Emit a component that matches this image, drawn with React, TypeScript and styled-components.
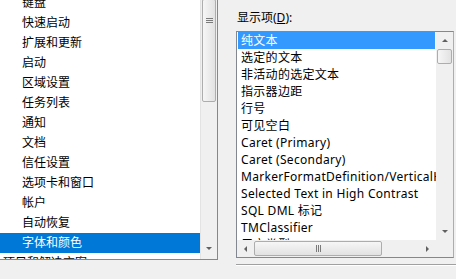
import * as React from 'react'
import styled, { createGlobalStyle } from 'styled-components'

const GlobalStyle = createGlobalStyle`
  html, body {
    margin: 0;
    padding: 0;
    background: #f0f0f0;
    font-family: "Noto Sans", "Noto Sans CJK SC", sans-serif;
    font-size: 12px;
    color: #000;
  }
`

const Page = styled.div`
  width: 456px;
  height: 279px;
  display: flex;
  overflow: hidden;
  background: #f0f0f0;
`

const TreePane = styled.div`
  width: 217px;
  height: 259px;
  display: flex;
  background: #fff;
  border-right: 1px solid #828790;
  border-bottom: 1px solid #828790;
  flex-shrink: 0;
`

const TreeList = styled.div`
  flex: 1;
  overflow: hidden;
`

const TreeScroll = styled.div`
  margin-top: -7px;
  display: flex;
  flex-direction: column;
`

const TreeItem = styled.div<{ $selected?: boolean; $top?: boolean }>`
  height: 20px;
  line-height: 20px;
  padding-left: ${p => (p.$top ? '3px' : '22px')};
  white-space: nowrap;
  background: ${p => (p.$selected ? '#0078d7' : 'transparent')};
  color: ${p => (p.$selected ? '#fff' : '#000')};
`

const VScrollBar = styled.div<{ $bordered?: boolean }>`
  width: 17px;
  display: flex;
  flex-direction: column;
  align-items: center;
  background: #f0f0f0;
  border-left: ${p => (p.$bordered ? '1px solid #e3e3e3' : 'none')};
  box-sizing: border-box;
`

const Thumb = styled.div<{ $horizontal?: boolean }>`
  box-sizing: border-box;
  border: 1px solid #adadad;
  border-radius: 2px;
  background: ${p =>
    p.$horizontal
      ? 'linear-gradient(to bottom, #f6f6f6, #e2e2e2)'
      : 'linear-gradient(to right, #f6f6f6, #e2e2e2)'};
  display: flex;
  align-items: center;
  justify-content: center;
`

const Grip = styled.div<{ $horizontal?: boolean }>`
  display: flex;
  flex-direction: ${p => (p.$horizontal ? 'row' : 'column')};
  gap: 1px;
  & > span {
    display: block;
    background: #7a7a7a;
    width: ${p => (p.$horizontal ? '1px' : '7px')};
    height: ${p => (p.$horizontal ? '7px' : '1px')};
  }
`

const Arrow = styled.div<{ $dir: 'up' | 'down' | 'left' | 'right' }>`
  width: 0;
  height: 0;
  border: 3px solid transparent;
  ${p =>
    p.$dir === 'up'
      ? 'border-bottom: 3px solid #606060; border-top-width: 0;'
      : p.$dir === 'down'
      ? 'border-top: 3px solid #606060; border-bottom-width: 0;'
      : p.$dir === 'left'
      ? 'border-right: 3px solid #606060; border-left-width: 0;'
      : 'border-left: 3px solid #606060; border-right-width: 0;'}
`

const ArrowBox = styled.div<{ $w: number; $h: number }>`
  width: ${p => p.$w}px;
  height: ${p => p.$h}px;
  display: flex;
  align-items: center;
  justify-content: center;
  flex-shrink: 0;
`

const Spacer = styled.div`
  flex: 1;
`

const RightPane = styled.div`
  flex: 1;
  padding-left: 18px;
  display: flex;
  flex-direction: column;
`

const Label = styled.div`
  height: 31px;
  line-height: 14px;
  padding-top: 11px;
  padding-left: 1px;
  box-sizing: border-box;
  color: #000;
  & u {
    text-decoration: underline;
  }
`

const ListBox = styled.div`
  width: 218px;
  height: 227px;
  box-sizing: border-box;
  border: 1px solid #828790;
  border-right-color: #abadb3;
  background: #fff;
  display: grid;
  grid-template-columns: 1fr 17px;
  grid-template-rows: 1fr 17px;
  overflow: hidden;
`

const Rows = styled.div`
  overflow: hidden;
  padding: 0 1px;
`

const Row = styled.div<{ $selected?: boolean }>`
  height: 17px;
  line-height: 17px;
  padding-left: 3px;
  white-space: nowrap;
  letter-spacing: 0.3px;
  background: ${p => (p.$selected ? '#3399ff' : 'transparent')};
  color: ${p => (p.$selected ? '#fff' : '#000')};
`

const HScrollBar = styled.div`
  display: flex;
  align-items: center;
  background: #f0f0f0;
`

const Corner = styled.div`
  background: #f0f0f0;
`

const Separator = styled.div`
  margin-top: 6px;
  height: 0;
  border-top: 1px solid #a0a0a0;
  border-bottom: 1px solid #fff;
`

const treeItems = [
  '键盘',
  '快速启动',
  '扩展和更新',
  '启动',
  '区域设置',
  '任务列表',
  '通知',
  '文档',
  '信任设置',
  '选项卡和窗口',
  '帐户',
  '自动恢复',
  '字体和颜色',
]

const displayItems = [
  '纯文本',
  '选定的文本',
  '非活动的选定文本',
  '指示器边距',
  '行号',
  '可见空白',
  'Caret (Primary)',
  'Caret (Secondary)',
  'MarkerFormatDefinition/VerticalHighlight',
  'Selected Text in High Contrast',
  'SQL DML 标记',
  'TMClassifier',
  '    用户类型',
]

function Grips({ horizontal }: { horizontal?: boolean }) {
  return (
    <Grip $horizontal={horizontal}>
      <span />
      <span />
      <span />
    </Grip>
  )
}

export default function App() {
  return (
    <Page>
      <GlobalStyle />
      <TreePane>
        <TreeList>
          <TreeScroll>
            {treeItems.map(t => (
              <TreeItem key={t} $selected={t === '字体和颜色'}>
                {t}
              </TreeItem>
            ))}
            <TreeItem $top>项目和解决方案</TreeItem>
          </TreeScroll>
        </TreeList>
        <VScrollBar $bordered>
          <Thumb style={{ width: 14, height: 103, marginTop: -1 }}>
            <div style={{ marginTop: -60 }}>
              <Grips />
            </div>
          </Thumb>
          <Spacer />
          <ArrowBox $w={16} $h={22}>
            <Arrow $dir="down" />
          </ArrowBox>
        </VScrollBar>
      </TreePane>

      <RightPane>
        <Label>
          显示项(<u>D</u>):
        </Label>
        <ListBox>
          <Rows>
            {displayItems.map((t, i) => (
              <Row key={i} $selected={i === 0}>
                {t}
              </Row>
            ))}
          </Rows>
          <VScrollBar>
            <ArrowBox $w={16} $h={17}>
              <Arrow $dir="up" />
            </ArrowBox>
            <Thumb style={{ width: 15, height: 15 }} />
            <Spacer />
            <ArrowBox $w={16} $h={17}>
              <Arrow $dir="down" />
            </ArrowBox>
          </VScrollBar>
          <HScrollBar>
            <ArrowBox $w={17} $h={16}>
              <Arrow $dir="left" />
            </ArrowBox>
            <Thumb $horizontal style={{ width: 128, height: 15 }}>
              <Grips horizontal />
            </Thumb>
            <Spacer />
            <ArrowBox $w={17} $h={16}>
              <Arrow $dir="right" />
            </ArrowBox>
          </HScrollBar>
          <Corner />
        </ListBox>
        <Separator />
      </RightPane>
    </Page>
  )
}
